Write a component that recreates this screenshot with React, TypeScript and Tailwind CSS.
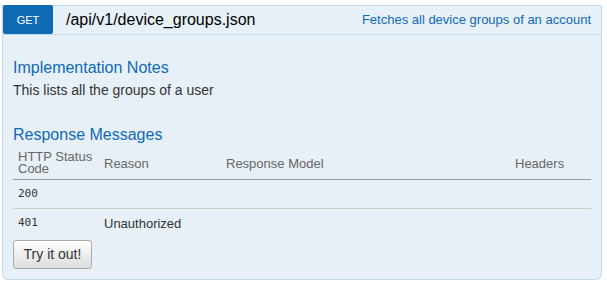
import React from "react";

export default function App() {
  const font = { fontFamily: '"Liberation Sans", Arial, sans-serif' };
  const mono = { fontFamily: '"DejaVu Sans Mono", monospace' };
  return (
    <div className="w-[607px] h-[284px] bg-white pt-[5px] pl-[2px]" style={font}>
      <div className="w-[600px]">
        <div className="flex items-center h-[30px] border border-[#c3d9ec] bg-[#e7f0f7]">
          <div className="-mt-px self-start h-[29px] w-[50px] rounded-[2px] bg-[#0f6ab4] text-white text-[11px] flex items-center justify-center pt-[2px]">
            GET
          </div>
          <div className="ml-[13px] text-[16px] text-black leading-none">/api/v1/device_groups.json</div>
          <div className="ml-auto mr-[10px] text-[13px] text-[#0f6ab4]">Fetches all device groups of an account</div>
        </div>
        <div className="h-[245px] border border-t-0 border-[#c3d9ec] bg-[#e7f0f7] rounded-b-[6px] px-[10px] pt-[24px]">
          <h4 className="text-[16px] leading-[18px] text-[#0f6ab4]">Implementation Notes</h4>
          <p className="text-[14px] leading-[16px] text-[#333] mt-[5px]">This lists all the groups of a user</p>
          <h4 className="text-[16px] leading-[18px] text-[#0f6ab4] mt-[28px]">Response Messages</h4>
          <table className="w-[578px] mt-[5px] border-collapse table-fixed">
            <colgroup>
              <col className="w-[86px]" />
              <col className="w-[122px]" />
              <col className="w-[289px]" />
              <col />
            </colgroup>
            <thead>
              <tr className="border-b border-[#999]">
                <th className="text-left font-normal text-[13px] leading-[12px] text-[#666] pl-[5px] pr-0 pt-[2px] pb-[4px] align-middle">
                  HTTP Status
                  <br />
                  Code
                </th>
                <th className="text-left font-normal text-[13px] leading-[12px] text-[#666] pl-[5px] align-middle">Reason</th>
                <th className="text-left font-normal text-[13px] leading-[12px] text-[#666] pl-[5px] align-middle">Response Model</th>
                <th className="text-left font-normal text-[13px] leading-[12px] text-[#666] pl-[5px] align-middle">Headers</th>
              </tr>
            </thead>
            <tbody>
              <tr className="border-b border-[#ccc] h-[29px]">
                <td className="pl-[5px] text-[11px] text-[#333]" style={mono}>200</td>
                <td className="pl-[5px] text-[13px] text-[#333]"></td>
                <td></td>
                <td></td>
              </tr>
              <tr className="h-[29px]">
                <td className="pl-[5px] text-[11px] text-[#333]" style={mono}>401</td>
                <td className="pl-[5px] text-[13px] text-[#333]">Unauthorized</td>
                <td></td>
                <td></td>
              </tr>
            </tbody>
          </table>
          <button className="mt-[2px] w-[79px] h-[29px] border border-[#aaa] rounded-[3px] bg-gradient-to-b from-white to-[#ddd] text-[14px] text-[#333]">
            Try it out!
          </button>
        </div>
      </div>
    </div>
  );
}
